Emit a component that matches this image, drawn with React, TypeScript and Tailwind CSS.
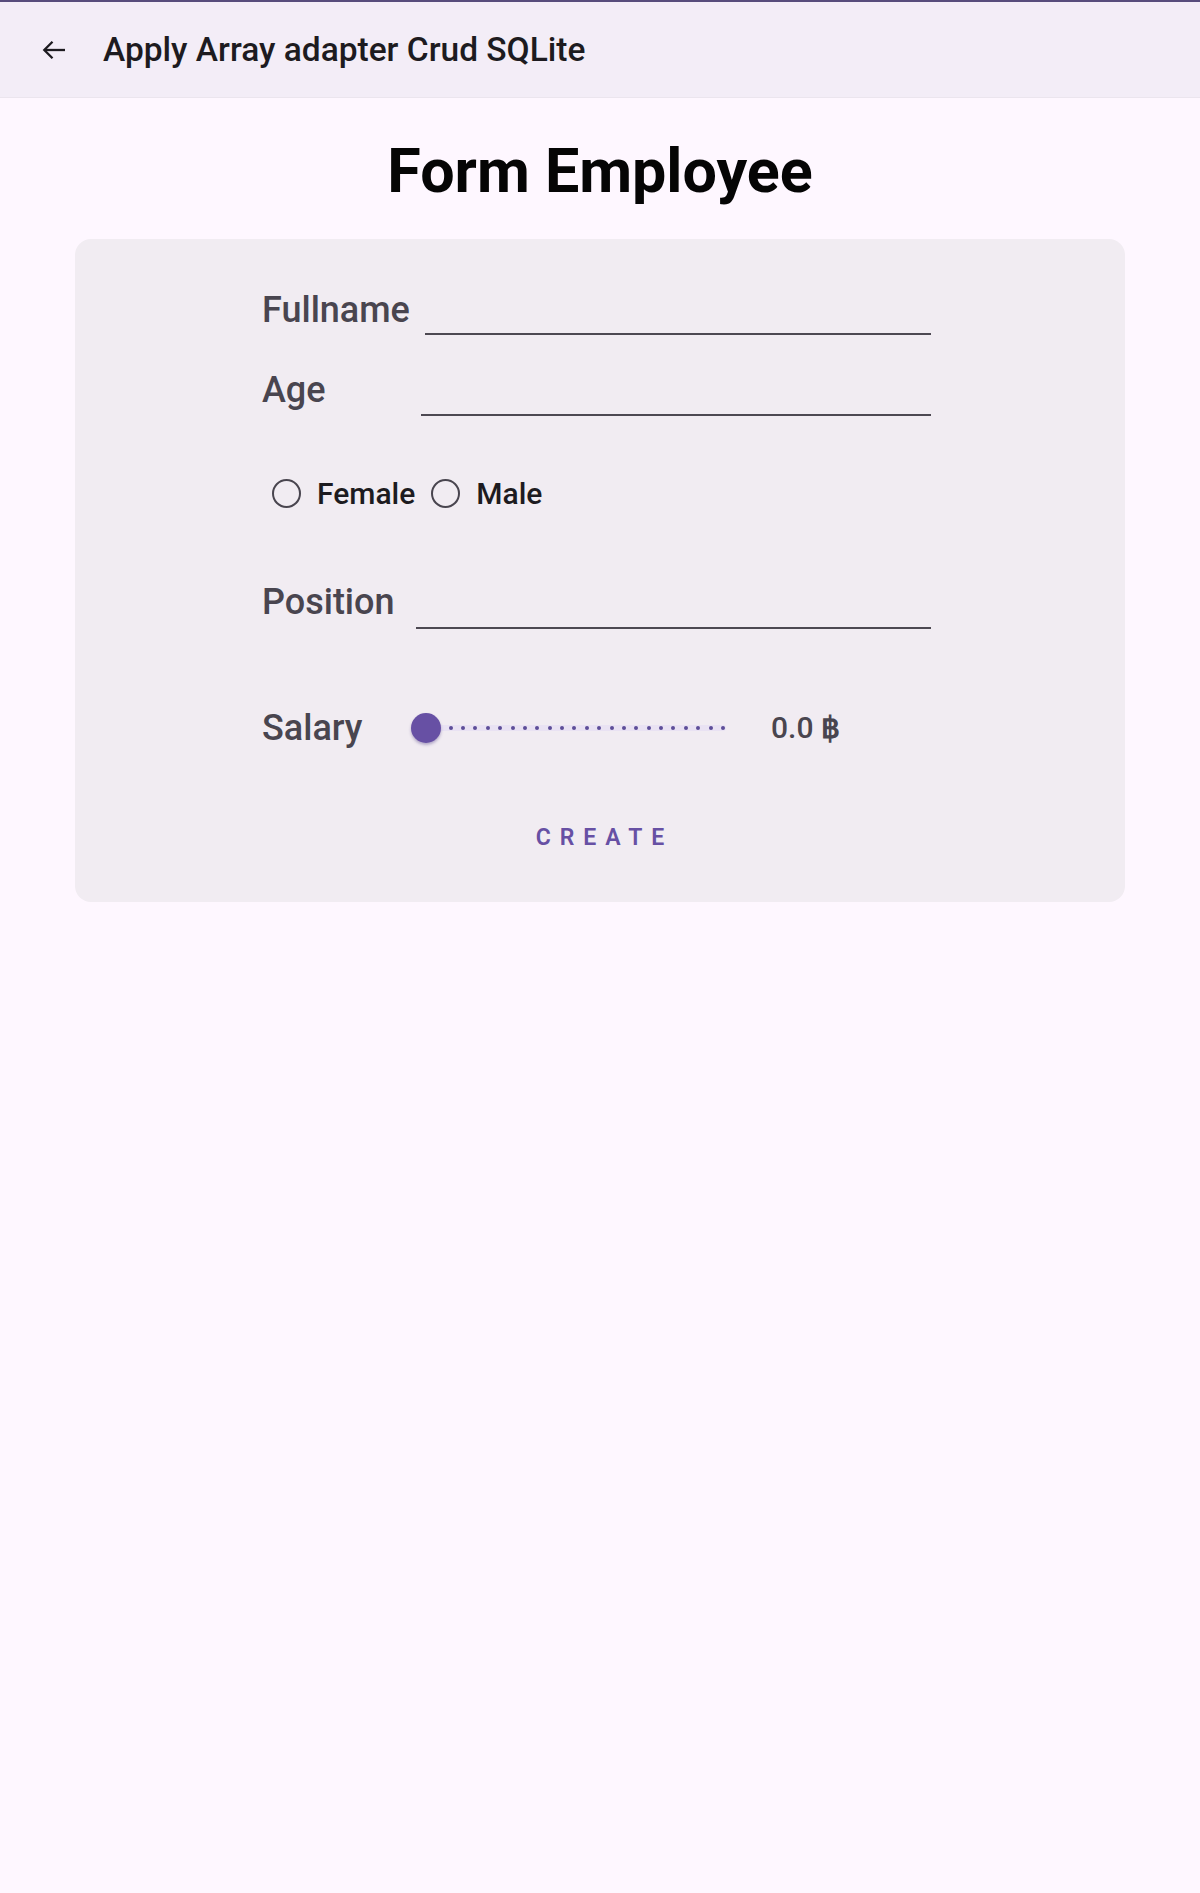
import React from "react";

function Slider() {
  const ticks = Array.from({ length: 25 }, (_, i) => i);
  return (
    <div className="relative h-[36px] w-[327px]">
      <div className="absolute left-[12px] top-[15px] h-[6px] w-[303px] rounded-full bg-[#e9e2f3]" />
      {ticks.map((i) => (
        <div
          key={i}
          className="absolute top-[16px] h-[4px] w-[4px] rounded-full bg-[#5d4d99]"
          style={{ left: `${15 + i * 12.37 - 2}px` }}
        />
      ))}
      <div className="absolute left-0 top-[3px] h-[30px] w-[30px] rounded-full bg-[#6750a4] shadow-[0_2px_3px_rgba(60,40,120,0.35)]" />
    </div>
  );
}

function Radio({ label }: { label: string }) {
  return (
    <div className="flex items-center">
      <div className="h-[29px] w-[29px] rounded-full border-[2.5px] border-[#49454f]" />
      <span className="ml-[16px] text-[30px] leading-[30px] font-medium text-[#1d1b20]">{label}</span>
    </div>
  );
}

export default function App() {
  return (
    <div className="min-h-[1893px] w-full bg-[#fef7ff] font-['Roboto','Liberation_Sans',sans-serif]">
      <header className="flex h-[98px] items-center border-t-2 border-b border-t-[#574c7c] border-b-[#ebe5ee] bg-[#f3edf7]">
        <svg className="ml-[42px]" width="24" height="20" viewBox="0 0 24 20" fill="none">
          <path d="M23 10H2.5" stroke="#1d1b20" strokeWidth="2.3" />
          <path d="M10.5 1.8L2.3 10l8.2 8.2" stroke="#1d1b20" strokeWidth="2.3" />
        </svg>
        <h1 className="ml-[37px] text-[33.5px] leading-[34px] font-medium text-[#1d1b20]">
          Apply Array adapter Crud SQLite
        </h1>
      </header>

      <h2 className="mt-[43px] text-center text-[61px] leading-[60px] font-bold text-[#050505]">
        Form Employee
      </h2>

      <div className="mx-[75px] mt-[38px] h-[663px] rounded-2xl bg-[#f1ecf2] pt-[53px]">
        <div className="ml-[187px] w-[669px] text-[#49454f]">
          <div className="flex h-[80px] items-start">
            <span className="w-[163px] text-[36px] leading-[36px] font-medium">Fullname</span>
            <div className="mt-[41px] h-[2px] flex-1 bg-[#4d4952]" />
          </div>
          <div className="flex h-[107px] items-start">
            <span className="w-[159px] text-[36px] leading-[36px] font-medium">Age</span>
            <div className="mt-[42px] h-[2px] flex-1 bg-[#4d4952]" />
          </div>
          <div className="ml-[10px] flex h-[29px] items-center gap-[16px]">
            <Radio label="Female" />
            <Radio label="Male" />
          </div>
          <div className="mt-[76px] flex h-[46px] items-start">
            <span className="w-[154px] text-[36px] leading-[36px] font-medium">Position</span>
            <div className="mt-[43px] h-[2px] flex-1 bg-[#4d4952]" />
          </div>
          <div className="mt-[80px] flex h-[36px] items-center">
            <span className="w-[149px] text-[36px] leading-[36px] font-medium">Salary</span>
            <Slider />
            <span className="ml-[33px] text-[30px] leading-[30px] font-medium">
              0.0 <span className="font-bold">฿</span>
            </span>
          </div>
        </div>
        <div className="mt-[80px] pl-[9px] text-center text-[23px] leading-[23px] font-semibold tracking-[9px] text-[#6750a4]">
          CREATE
        </div>
      </div>
    </div>
  );
}
